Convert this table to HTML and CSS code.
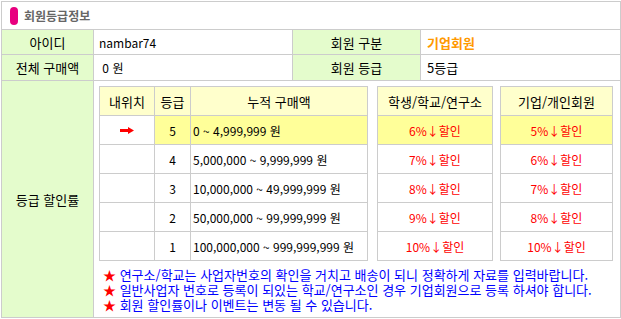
FILE: index.html
```html
<!DOCTYPE html>
<html lang="ko">
<head>
<meta charset="utf-8">
<link rel="stylesheet" href="styles.css">
</head>
<body>
<div class="board">
  <div class="title"><span class="pill"></span><span class="title-text">회원등급정보</span></div>

  <div class="lbl">아이디</div>
  <div class="val sm">nambar74</div>
  <div class="lbl">회원 구분</div>
  <div class="val val-r orange">기업회원</div>

  <div class="lbl">전체 구매액</div>
  <div class="val sm">&nbsp;0 원</div>
  <div class="lbl">회원 등급</div>
  <div class="val val-r">5등급</div>

  <div class="lbl">등급 할인률</div>
  <div class="rate">
    <div class="tables">
      <div class="tbl t1">
        <div class="th">내위치</div><div class="th">등급</div><div class="th">누적 구매액</div>
        <div class="td"><svg width="14" height="7" viewBox="0 0 14 7"><rect x="0" y="2" width="9" height="3" fill="#ff0000"/><polygon points="8,0 14,3.5 8,7" fill="#ff0000"/></svg></div><div class="td c sm hi">5</div><div class="td l sm hi">0 ~ 4,999,999 원</div>
        <div class="td"></div><div class="td c sm">4</div><div class="td l sm">5,000,000 ~ 9,999,999 원</div>
        <div class="td"></div><div class="td c sm">3</div><div class="td l sm">10,000,000 ~ 49,999,999 원</div>
        <div class="td"></div><div class="td c sm">2</div><div class="td l sm">50,000,000 ~ 99,999,999 원</div>
        <div class="td"></div><div class="td c sm">1</div><div class="td l sm">100,000,000 ~ 999,999,999 원</div>
      </div>
      <div class="tbl t2">
        <div class="th">학생/학교/연구소</div>
        <div class="td c sm red hi">6%↓할인</div>
        <div class="td c sm red">7%↓할인</div>
        <div class="td c sm red">8%↓할인</div>
        <div class="td c sm red">9%↓할인</div>
        <div class="td c sm red">10%↓할인</div>
      </div>
      <div class="tbl t3">
        <div class="th">기업/개인회원</div>
        <div class="td c sm red hi">5%↓할인</div>
        <div class="td c sm red">6%↓할인</div>
        <div class="td c sm red">7%↓할인</div>
        <div class="td c sm red">8%↓할인</div>
        <div class="td c sm red">10%↓할인</div>
      </div>
    </div>
    <ul class="notes">
      <li><span class="star">★</span> 연구소/학교는 사업자번호의 확인을 거치고 배송이 되니 정확하게 자료를 입력바랍니다.</li>
      <li><span class="star">★</span> 일반사업자 번호로 등록이 되있는 학교/연구소인 경우 기업회원으로 등록 하셔야 합니다.</li>
      <li><span class="star">★</span> 회원 할인률이나 이벤트는 변동 될 수 있습니다.</li>
    </ul>
  </div>
</div>
</body>
</html>
```

FILE: styles.css
```css
html, body {
  margin: 0;
  padding: 0;
  background: #ffffff;
}
body {
  padding: 1px 0 0 1px;
  font-family: "Noto Sans CJK KR", "Noto Sans", sans-serif;
  font-size: 13px;
  color: #000;
}
.board {
  display: grid;
  grid-template-columns: 91px 198px 127px 199px;
  grid-template-rows: 27px 24px 25px 236px;
  gap: 1px;
  width: 618px;
  background: #cccccc;
  border: 1px solid #cccccc;
}
.title {
  grid-column: 1 / 5;
  background: #ffffff;
  display: flex;
  align-items: center;
  padding-left: 8px;
}
.pill {
  width: 8px;
  height: 18px;
  border-radius: 4px;
  background: #e8007f;
}
.title-text {
  margin-left: 6px;
  font-weight: bold;
  color: #666666;
  font-size: 12px;
}
.sm {
  font-size: 12px;
}
.lbl {
  background: #e4fccc;
  display: flex;
  align-items: center;
  justify-content: center;
}
.val {
  background: #ffffff;
  display: flex;
  align-items: center;
  padding-left: 5px;
}
.val-r {
  padding-left: 6px;
}
.orange {
  color: #ff9900;
  font-weight: bold;
}
.rate {
  grid-column: 2 / 5;
  background: #ffffff;
  padding: 5px 0 0 5px;
}
.tables {
  display: flex;
  align-items: flex-start;
}
.tbl {
  display: grid;
  gap: 1px;
  background: #cccccc;
  border: 1px solid #cccccc;
  grid-auto-rows: 28px;
  grid-template-rows: 28px;
}
.t1 {
  grid-template-columns: 54px 35px 176px;
}
.t2 {
  grid-template-columns: 114px;
  margin-left: 9px;
}
.t3 {
  grid-template-columns: 111px;
  margin-left: 7px;
}
.th {
  background: #ffffcc;
  display: flex;
  align-items: center;
  justify-content: center;
}
.td {
  background: #ffffff;
  display: flex;
  align-items: center;
  justify-content: center;
}
.td.l {
  justify-content: flex-start;
  padding-left: 2px;
}
.td.hi {
  background: #ffff99;
}
.red {
  color: #ff0000;
}
.notes {
  list-style: none;
  margin: 6px 0 0 4px;
  padding: 0;
  color: #0000ff;
  line-height: 15px;
}
.star {
  color: #ff0000;
}
```
